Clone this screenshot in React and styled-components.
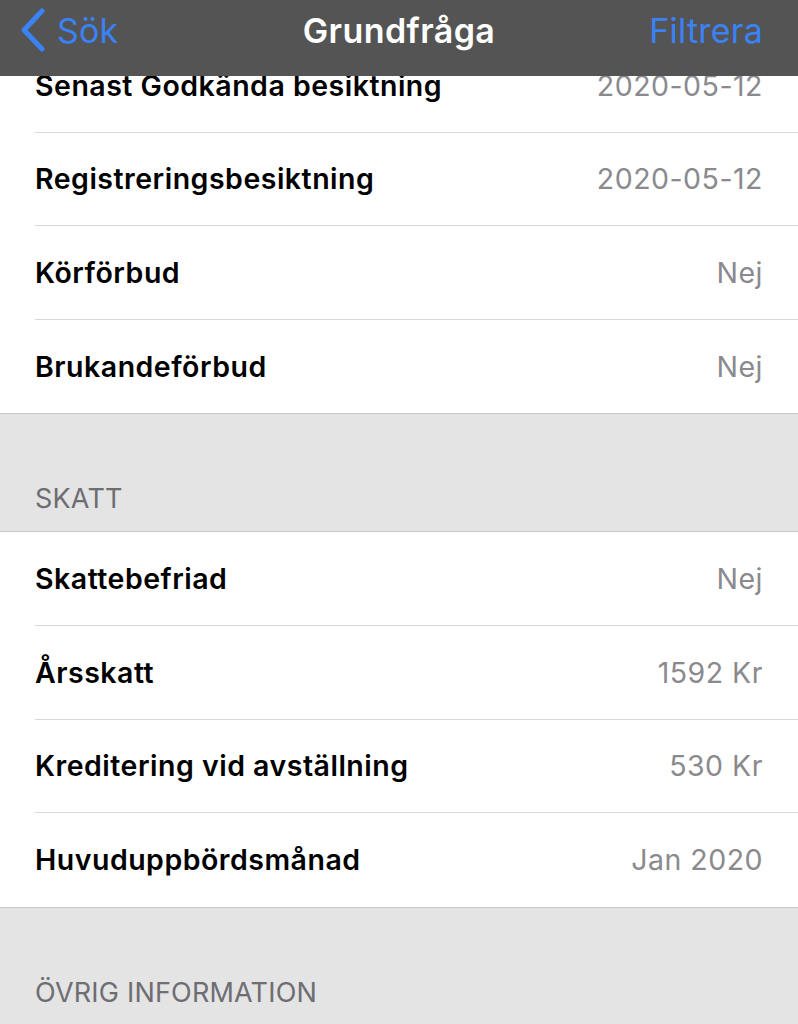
import styled, { createGlobalStyle } from "styled-components";

const GlobalStyle = createGlobalStyle`
  html, body {
    margin: 0;
    padding: 0;
    background: #ffffff;
    font-family: Inter, "Noto Sans", "Liberation Sans", sans-serif;
    -webkit-font-smoothing: antialiased;
  }
`;

const Screen = styled.div`
  position: relative;
  width: 798px;
  height: 1024px;
  overflow: hidden;
  background: #ffffff;
`;

const NavBar = styled.header`
  position: absolute;
  top: 0;
  left: 0;
  right: 0;
  z-index: 2;
  height: 76px;
  background: #545454;
  display: grid;
  grid-template-columns: 1fr auto 1fr;
  align-items: center;
  padding: 0 35px 16px;
  box-sizing: border-box;
`;

const BackButton = styled.button`
  justify-self: start;
  display: flex;
  align-items: center;
  gap: 11px;
  background: none;
  border: 0;
  padding: 0;
  margin-left: -15px;
  color: #3a82f6;
  font-family: inherit;
  font-size: 34px;
  letter-spacing: 0.2px;
  cursor: pointer;
`;

const Title = styled.h1`
  margin: 0;
  color: #ffffff;
  font-size: 34px;
  font-weight: 600;
  letter-spacing: 0.4px;
`;

const ActionButton = styled.button`
  justify-self: end;
  background: none;
  border: 0;
  padding: 0;
  color: #3a82f6;
  font-family: inherit;
  font-size: 34px;
  letter-spacing: 0.2px;
  cursor: pointer;
`;

// list is scrolled: its first row sits partly under the bar
const Content = styled.main`
  padding-top: 39px;
`;

const Group = styled.section`
  background: #ffffff;
  border-bottom: 1px solid #c8c8cc;
`;

const Row = styled.div`
  display: flex;
  align-items: center;
  justify-content: space-between;
  height: 93.6px;
  margin-left: 35px;
  padding-right: 35px;
  box-sizing: border-box;
  border-bottom: ${(p) => (p.$last ? "0" : "1px solid #d8d8dc")};
`;

const Label = styled.span`
  color: #000000;
  font-size: 28.5px;
  font-weight: 600;
  letter-spacing: 0.5px;
`;

const Value = styled.span`
  color: #8a8a8e;
  font-size: 28.5px;
  font-weight: 400;
  letter-spacing: 0.5px;
`;

const SectionHeader = styled.div`
  background: #e4e4e4;
  height: 118px;
  display: flex;
  align-items: flex-end;
  padding: 0 35px 16px;
  box-sizing: border-box;
  border-bottom: 1px solid #c8c8cc;
  color: #6d6d72;
  font-size: 27px;
  font-weight: 400;
  letter-spacing: 0.2px;
  text-transform: uppercase;
`;

const Chevron = () => (
  <svg width="26" height="44" viewBox="0 0 26 44" fill="none">
    <path
      d="M22 3 L4 22 L22 41"
      stroke="#3a82f6"
      strokeWidth="5"
      strokeLinecap="round"
      strokeLinejoin="round"
    />
  </svg>
);

const inspection = [
  ["Senast Godkända besiktning", "2020-05-12"],
  ["Registreringsbesiktning", "2020-05-12"],
  ["Körförbud", "Nej"],
  ["Brukandeförbud", "Nej"],
];

const tax = [
  ["Skattebefriad", "Nej"],
  ["Årsskatt", "1592 Kr"],
  ["Kreditering vid avställning", "530 Kr"],
  ["Huvuduppbördsmånad", "Jan 2020"],
];

function RowGroup({ rows }) {
  return (
    <Group>
      {rows.map(([label, value], i) => (
        <Row key={label} $last={i === rows.length - 1}>
          <Label>{label}</Label>
          <Value>{value}</Value>
        </Row>
      ))}
    </Group>
  );
}

export default function App() {
  return (
    <>
      <GlobalStyle />
      <Screen>
        <NavBar>
          <BackButton>
            <Chevron />
            Sök
          </BackButton>
          <Title>Grundfråga</Title>
          <ActionButton>Filtrera</ActionButton>
        </NavBar>
        <Content>
          <RowGroup rows={inspection} />
          <SectionHeader>Skatt</SectionHeader>
          <RowGroup rows={tax} />
          <SectionHeader>Övrig information</SectionHeader>
        </Content>
      </Screen>
    </>
  );
}
